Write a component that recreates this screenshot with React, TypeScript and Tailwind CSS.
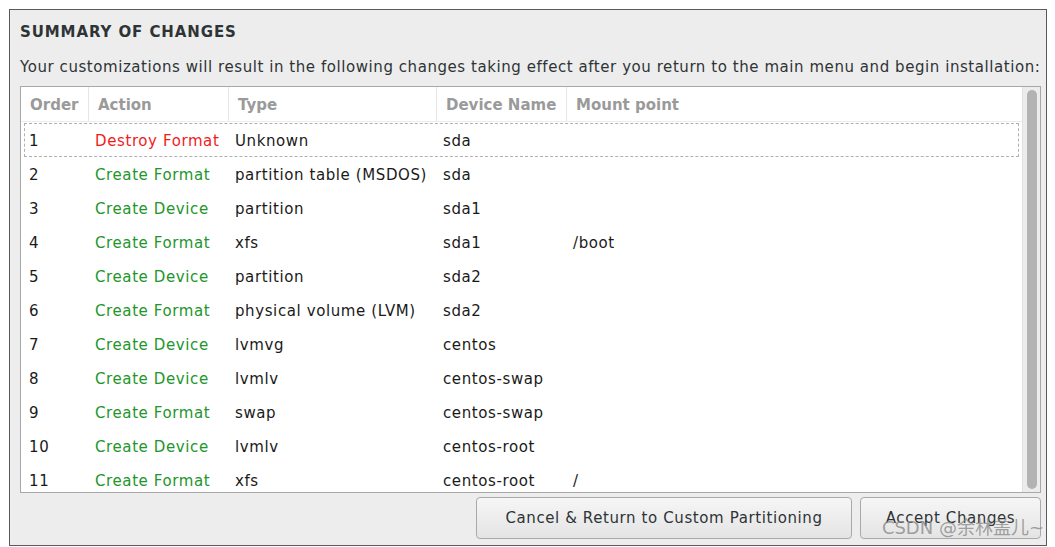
const font = { fontFamily: '"DejaVu Sans", "Noto Sans CJK SC", sans-serif', letterSpacing: "0.6px" };

type Row = { order: string; action: string; type: string; device: string; mount: string };

const rows: Row[] = [
  { order: "1", action: "Destroy Format", type: "Unknown", device: "sda", mount: "" },
  { order: "2", action: "Create Format", type: "partition table (MSDOS)", device: "sda", mount: "" },
  { order: "3", action: "Create Device", type: "partition", device: "sda1", mount: "" },
  { order: "4", action: "Create Format", type: "xfs", device: "sda1", mount: "/boot" },
  { order: "5", action: "Create Device", type: "partition", device: "sda2", mount: "" },
  { order: "6", action: "Create Format", type: "physical volume (LVM)", device: "sda2", mount: "" },
  { order: "7", action: "Create Device", type: "lvmvg", device: "centos", mount: "" },
  { order: "8", action: "Create Device", type: "lvmlv", device: "centos-swap", mount: "" },
  { order: "9", action: "Create Format", type: "swap", device: "centos-swap", mount: "" },
  { order: "10", action: "Create Device", type: "lvmlv", device: "centos-root", mount: "" },
  { order: "11", action: "Create Format", type: "xfs", device: "centos-root", mount: "/" },
];

function HeaderCell({ label, w, last }: { label: string; w: string; last?: boolean }) {
  return (
    <div className={`${w} ${last ? "" : "border-r border-[#e6e6e6]"} flex h-full items-center whitespace-nowrap pl-[9px] pt-[3px] font-bold tracking-[0px] text-[#9a9a9a]`}>
      {label}
    </div>
  );
}

export default function App() {
  return (
    <div className="h-[547px] w-[1055px] bg-white pl-[9px] pt-[9px] text-[15px]" style={font}>
      <div className="flex h-[537px] w-[1038px] flex-col border border-[#5a5a5a] bg-[#ededed] pl-[10px] pr-[5px]">
        <div className="mt-[12px] text-[15px] font-bold leading-5 tracking-[0.9px] text-[#2e3436]">SUMMARY OF CHANGES</div>
        <div className="mt-[15px] whitespace-nowrap text-[15px] leading-5 tracking-[0.56px] text-[#2e3436]">
          Your customizations will result in the following changes taking effect after you return to the main menu and begin installation:
        </div>
        <div className="mt-[9px] flex h-[407px] border border-[#a8a8a8] bg-white">
          <div className="flex flex-1 flex-col overflow-hidden">
            <div className="flex h-[35px] shrink-0 border-b border-[#ececec]">
              <HeaderCell label="Order" w="w-[68px]" />
              <HeaderCell label="Action" w="w-[140px]" />
              <HeaderCell label="Type" w="w-[208px]" />
              <HeaderCell label="Device Name" w="w-[130px]" />
              <HeaderCell label="Mount point" w="flex-1" last />
            </div>
            <div className="flex flex-col pt-px">
              {rows.map((r, i) => (
                <div
                  key={r.order}
                  className={`mx-[3px] flex h-[34px] shrink-0 items-center pt-[2px] text-[#1a1a1a] ${i === 0 ? "border border-dashed border-[#b0b0b0]" : "border border-transparent"}`}
                >
                  <div className="w-[67px] pl-[4px]">{r.order}</div>
                  <div className={`w-[140px] whitespace-nowrap pl-[3px] ${i === 0 ? "text-[#f01c1c]" : "text-[#22962a]"}`}>{r.action}</div>
                  <div className="w-[208px] whitespace-nowrap pl-[3px]">{r.type}</div>
                  <div className="w-[130px] whitespace-nowrap pl-[3px]">{r.device}</div>
                  <div className="flex-1 pl-[3px]">{r.mount}</div>
                </div>
              ))}
            </div>
          </div>
          <div className="flex w-[18px] shrink-0 justify-center border-l border-[#e2e2e2] bg-[#ececec] py-[3px]">
            <div className="w-[10px] rounded-full bg-[#b3b3b3]" />
          </div>
        </div>
        <div className="mt-[4px] flex justify-end gap-[8px]">
          <button className="h-[42px] w-[376px] whitespace-nowrap rounded-[4px] border border-[#a9a9a9] bg-gradient-to-b from-[#f6f6f6] to-[#e4e4e4] pt-px text-[15px] text-[#2e3436]">
            Cancel &amp; Return to Custom Partitioning
          </button>
          <button className="relative h-[42px] w-[181px] whitespace-nowrap rounded-[4px] border border-[#a9a9a9] bg-gradient-to-b from-[#f6f6f6] to-[#e4e4e4] pt-px text-[15px] text-[#2e3436]">
            <span>Accept Changes</span>
            <span className="absolute bottom-[1px] right-[-4px] whitespace-nowrap text-[18px] leading-none tracking-normal text-[#8a8a8a]/80">CSDN @余林盖儿~</span>
          </button>
        </div>
      </div>
    </div>
  );
}
